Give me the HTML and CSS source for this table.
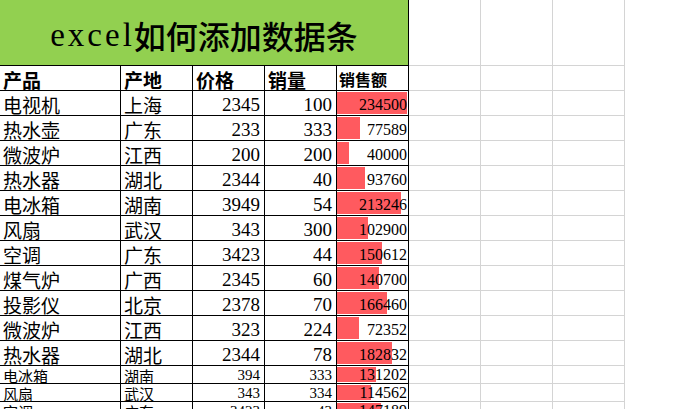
FILE: index.html
```html
<!DOCTYPE html>
<html lang="zh">
<head>
<meta charset="utf-8">
<title>excel如何添加数据条</title>
<link rel="stylesheet" href="styles.css">
</head>
<body>
<div class="sheet">
  <div class="row">
    <div class="c title"><span class="lat">excel</span>如何添加数据条</div>
    <div class="c e"></div><div class="c e"></div><div class="c e"></div>
  </div>
  <div class="row head">
    <div class="c t">产品</div><div class="c t">产地</div><div class="c t">价格</div><div class="c t">销量</div><div class="c t sm">销售额</div>
    <div class="c e"></div><div class="c e"></div><div class="c e"></div>
  </div>
  <div class="row">
    <div class="c t">电视机</div><div class="c t">上海</div><div class="c n">2345</div><div class="c n">100</div>
    <div class="c b"><div class="bar" style="width:70px"></div><span class="v">234500</span></div>
    <div class="c e"></div><div class="c e"></div><div class="c e"></div>
  </div>
  <div class="row">
    <div class="c t">热水壶</div><div class="c t">广东</div><div class="c n">233</div><div class="c n">333</div>
    <div class="c b"><div class="bar" style="width:23px"></div><span class="v">77589</span></div>
    <div class="c e"></div><div class="c e"></div><div class="c e"></div>
  </div>
  <div class="row">
    <div class="c t">微波炉</div><div class="c t">江西</div><div class="c n">200</div><div class="c n">200</div>
    <div class="c b"><div class="bar" style="width:12px"></div><span class="v">40000</span></div>
    <div class="c e"></div><div class="c e"></div><div class="c e"></div>
  </div>
  <div class="row">
    <div class="c t">热水器</div><div class="c t">湖北</div><div class="c n">2344</div><div class="c n">40</div>
    <div class="c b"><div class="bar" style="width:28px"></div><span class="v">93760</span></div>
    <div class="c e"></div><div class="c e"></div><div class="c e"></div>
  </div>
  <div class="row">
    <div class="c t">电冰箱</div><div class="c t">湖南</div><div class="c n">3949</div><div class="c n">54</div>
    <div class="c b"><div class="bar" style="width:64px"></div><span class="v">213246</span></div>
    <div class="c e"></div><div class="c e"></div><div class="c e"></div>
  </div>
  <div class="row">
    <div class="c t">风扇</div><div class="c t">武汉</div><div class="c n">343</div><div class="c n">300</div>
    <div class="c b"><div class="bar" style="width:31px"></div><span class="v">102900</span></div>
    <div class="c e"></div><div class="c e"></div><div class="c e"></div>
  </div>
  <div class="row">
    <div class="c t">空调</div><div class="c t">广东</div><div class="c n">3423</div><div class="c n">44</div>
    <div class="c b"><div class="bar" style="width:45px"></div><span class="v">150612</span></div>
    <div class="c e"></div><div class="c e"></div><div class="c e"></div>
  </div>
  <div class="row">
    <div class="c t">煤气炉</div><div class="c t">广西</div><div class="c n">2345</div><div class="c n">60</div>
    <div class="c b"><div class="bar" style="width:42px"></div><span class="v">140700</span></div>
    <div class="c e"></div><div class="c e"></div><div class="c e"></div>
  </div>
  <div class="row">
    <div class="c t">投影仪</div><div class="c t">北京</div><div class="c n">2378</div><div class="c n">70</div>
    <div class="c b"><div class="bar" style="width:50px"></div><span class="v">166460</span></div>
    <div class="c e"></div><div class="c e"></div><div class="c e"></div>
  </div>
  <div class="row">
    <div class="c t">微波炉</div><div class="c t">江西</div><div class="c n">323</div><div class="c n">224</div>
    <div class="c b"><div class="bar" style="width:22px"></div><span class="v">72352</span></div>
    <div class="c e"></div><div class="c e"></div><div class="c e"></div>
  </div>
  <div class="row">
    <div class="c t">热水器</div><div class="c t">湖北</div><div class="c n">2344</div><div class="c n">78</div>
    <div class="c b"><div class="bar" style="width:55px"></div><span class="v">182832</span></div>
    <div class="c e"></div><div class="c e"></div><div class="c e"></div>
  </div>
  <div class="row small">
    <div class="c t">电冰箱</div><div class="c t">湖南</div><div class="c n">394</div><div class="c n">333</div>
    <div class="c b"><div class="bar" style="width:39px"></div><span class="v">131202</span></div>
    <div class="c e"></div><div class="c e"></div><div class="c e"></div>
  </div>
  <div class="row small">
    <div class="c t">风扇</div><div class="c t">武汉</div><div class="c n">343</div><div class="c n">334</div>
    <div class="c b"><div class="bar" style="width:34px"></div><span class="v">114562</span></div>
    <div class="c e"></div><div class="c e"></div><div class="c e"></div>
  </div>
  <div class="row small">
    <div class="c t">空调</div><div class="c t">广东</div><div class="c n">3423</div><div class="c n">43</div>
    <div class="c b"><div class="bar" style="width:44px"></div><span class="v">147189</span></div>
    <div class="c e"></div><div class="c e"></div><div class="c e"></div>
  </div>
</div>
</body>
</html>
```

FILE: styles.css
```css
html, body {
  margin: 0;
  padding: 0;
  background: #fff;
  overflow: hidden;
}

.sheet {
  display: grid;
  grid-template-columns: 121px repeat(7, 72px);
  grid-template-rows: 66px repeat(12, 25px) repeat(3, 18px);
  width: 689px;
  height: 409px;
  overflow: hidden;
  font-family: "Liberation Serif", "Noto Sans CJK SC", serif;
  font-size: 19px;
  color: #000;
}

.row {
  display: contents;
}

.c {
  box-sizing: border-box;
  border-right: 1px solid #000;
  border-bottom: 1px solid #000;
  display: flex;
  align-items: flex-end;
  white-space: nowrap;
  line-height: 21px;
  padding: 0 3px 0 3px;
  min-width: 0;
}

.c.t {
  font-family: "Noto Sans CJK SC", sans-serif;
  justify-content: flex-start;
}

.c.n {
  justify-content: flex-end;
  padding-right: 4px;
}

.c.e {
  border-right-color: #d4d4d4;
  border-bottom-color: #d4d4d4;
  padding: 0;
}

.title {
  grid-column: span 5;
  background: #92d050;
  justify-content: center;
  align-items: center;
  padding: 5px 0 0 0;
  font-family: "Noto Sans CJK SC", sans-serif;
  font-size: 32px;
  line-height: 40px;
  font-weight: 500;
}

.title .lat {
  font-family: "Liberation Serif", serif;
  font-size: 33px;
  letter-spacing: 3px;
  font-weight: 400;
  margin-right: -1px;
}

.head .c.t {
  font-weight: 700;
}

.head .c.sm {
  font-size: 16px;
  padding-left: 2px;
}

.c.b {
  display: grid;
  grid-template-columns: 1fr;
  grid-template-rows: 1fr;
  padding: 1px 1px 1px 0;
  font-size: 16px;
  line-height: 18px;
}

.bar {
  grid-area: 1 / 1;
  justify-self: start;
  align-self: stretch;
  background: #ff5a5f;
}

.v {
  grid-area: 1 / 1;
  justify-self: end;
  align-self: end;
  position: relative;
}

.small .c {
  font-size: 15px;
  line-height: 15px;
  padding-bottom: 0;
}

.small .c.b {
  font-size: 16px;
  line-height: 15px;
  padding-bottom: 1px;
}

.small .c.e {
  padding: 0;
}
```
